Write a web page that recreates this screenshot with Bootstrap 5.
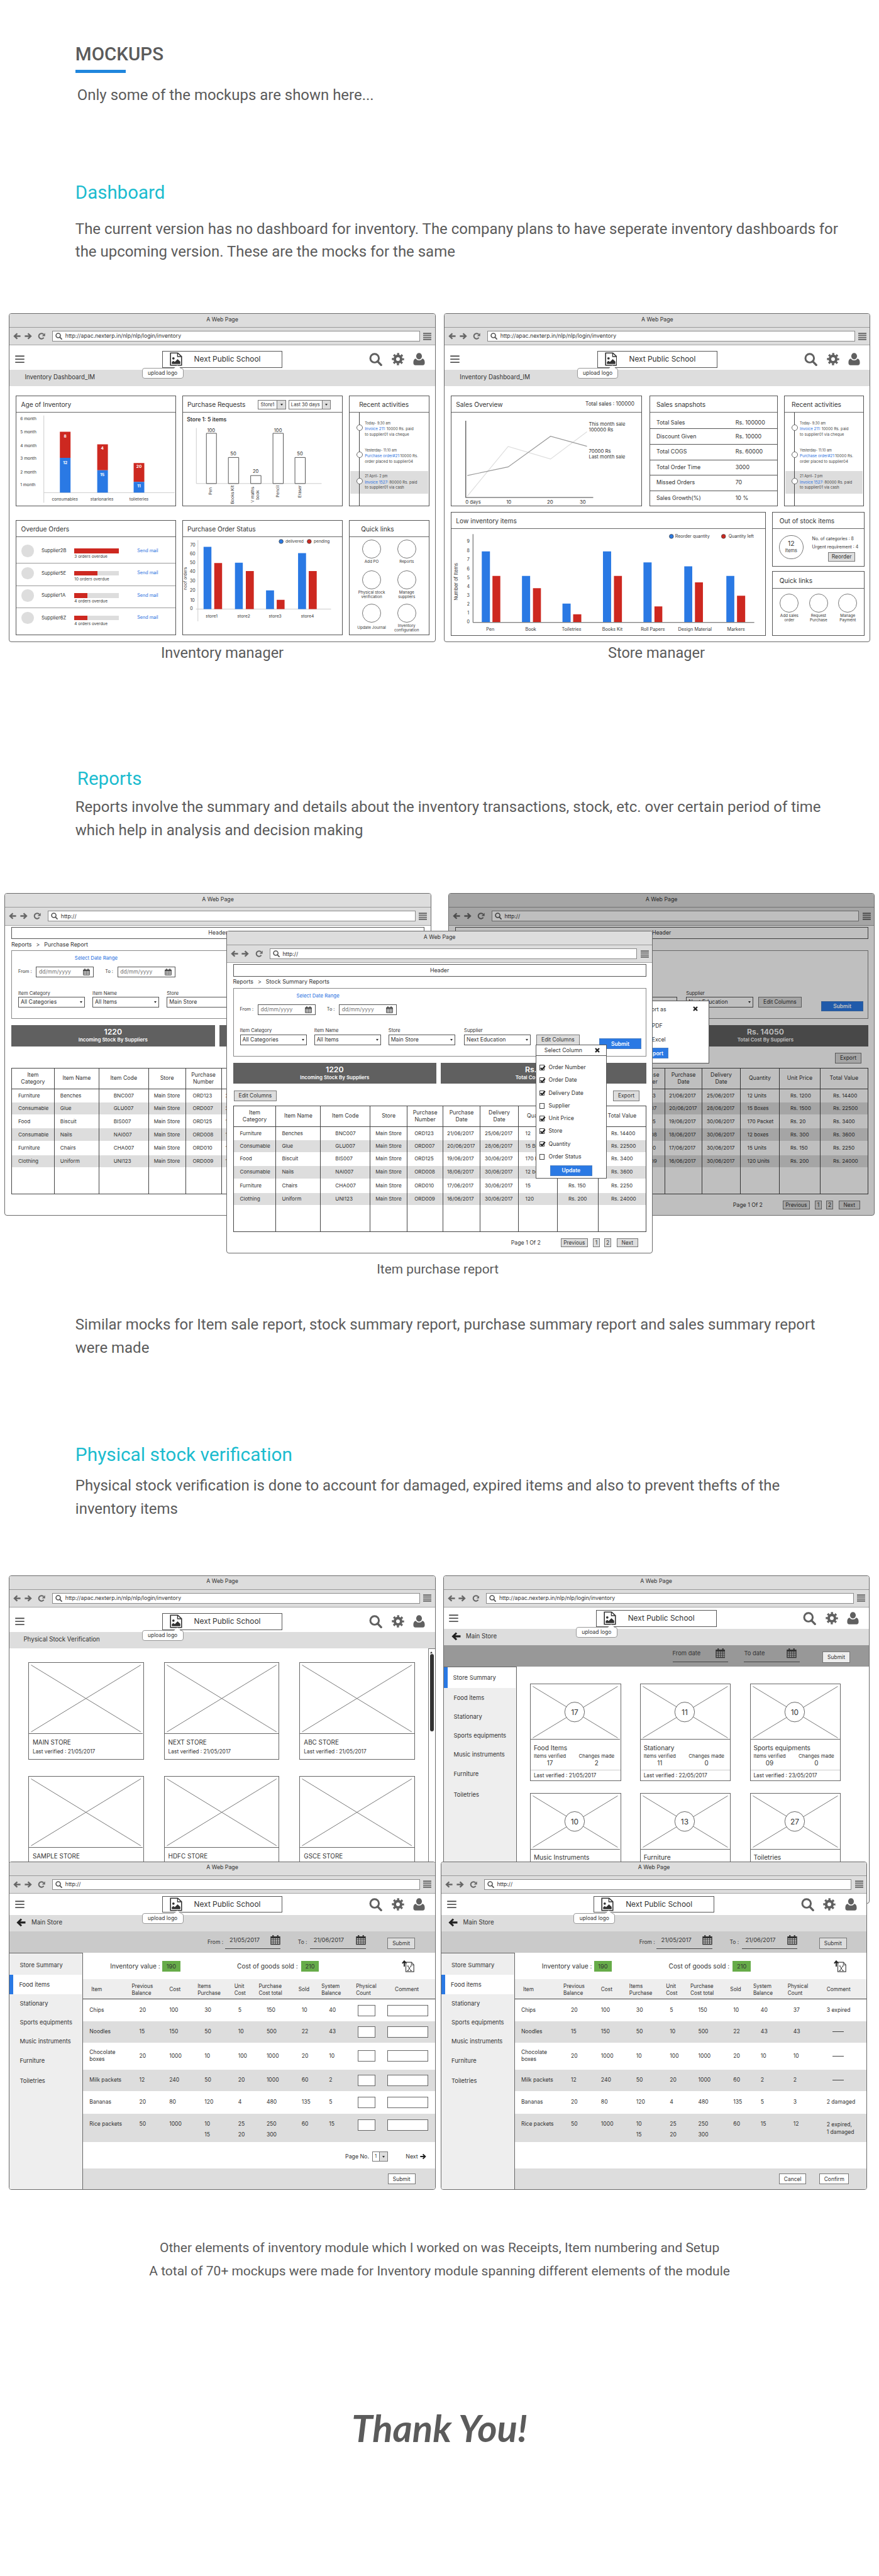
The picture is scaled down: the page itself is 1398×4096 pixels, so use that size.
<!DOCTYPE html>
<html lang="en">
<head>
<meta charset="utf-8">
<meta name="viewport" content="width=device-width, initial-scale=1">
<title>Mockups</title>
<link href="https://cdn.jsdelivr.net/npm/bootstrap@5.3.0/dist/css/bootstrap.min.css" rel="stylesheet">
<style>
html,body{overflow:hidden;background:#fff}
.sheet{width:1400px;height:4101px;zoom:.9987;font-family:Roboto,sans-serif;color:#5b5b5b;overflow:hidden}
.sheet h1{font-size:29.6px;line-height:36px;font-weight:500;color:#5b5b5b;margin:0}
.sheet h2{font-size:29.5px;line-height:36px;font-weight:400;color:#1cbccf;margin:0}
.copy{font-size:24px;line-height:36.5px;margin:0}
.inset{padding-left:120px}
.underbar{width:80px;height:5px;background:#1f86dd;margin-top:6px}
.cap{font-size:23.6px;line-height:30px}
.block-a{height:1223px;padding-top:69px}
.block-b{height:1075px}
.block-c{height:1263px}
.stage-reports{position:relative;height:576px;margin-top:82px}
.stage-stock{position:relative;height:980px;margin-top:87.5px}
.thanks{font-family:Lato,sans-serif;font-weight:700;font-style:italic;font-size:60px;line-height:64px}

/* browser frame */
.win{width:679px;border:1.5px solid #6a6a6a;border-radius:4px;background:#fff;color:#333;font-family:Inter,sans-serif;font-size:9px;line-height:1.2;overflow:hidden;position:relative;display:flex;flex-direction:column}
.win.win-at{position:absolute}
.win-title{height:22px;flex:none;background:#ddd;border-bottom:1px solid #999;display:flex;justify-content:center;align-items:center;padding-bottom:3px;font-size:8.8px}
.win-tools{height:28.5px;flex:none;background:#ddd;border-bottom:2px solid #a5a5a5;display:flex;align-items:center;padding:0 5.5px 0 6px;color:#666}
.win-url{flex:1;height:17px;background:#fff;border:1.3px solid #8a8a8a;margin:0 5.5px 0 11px;display:flex;align-items:center;padding-left:4px;color:#333;font-size:8.72px}
.ico{display:block;flex:none}
.school{height:39.2px;flex:none;display:grid;grid-template-columns:1fr 192px 1fr;align-items:center;padding-top:5px;position:relative;z-index:2;background:#fff}
.school.short{height:34.2px;padding-top:0}
.school-box{height:26.7px;border:1.2px solid #555;background:#fff;display:flex;align-items:center;padding-left:11px;font-size:11.9px;position:relative}
.school-box span.nm{margin-left:19px}
.tip{position:absolute;left:-33px;top:26px;width:66px;height:17px;border:1px solid #999;border-radius:4px;background:#fff;font-size:8.5px;display:flex;align-items:center;justify-content:center}
.tip svg{position:absolute;left:49px;top:-6px}
.subbar{height:25.5px;flex:none;background:#ddd;display:flex;align-items:center;padding:0 0 2px 24px;font-size:9.7px}
.panel{border:1.2px solid #555;background:#fff;display:flex;flex-direction:column;min-width:0}
.panel-h{height:25.8px;flex:none;border-bottom:1.2px solid #666;display:flex;align-items:center;padding:0 7px;font-size:10.2px;color:#333;padding-top:2px;white-space:nowrap}
.panel svg.plot{display:block;flex:none}
svg text{font-family:Inter,sans-serif;fill:#333}
svg .wh text{fill:#fff}
.dash1{display:grid;grid-template-columns:254.5px 255px 127.5px;column-gap:10.5px;row-gap:22px;grid-template-rows:176.6px 182.8px;padding:15px 0 0 10px}
.dash2{padding:15px 0 0 10px}
.mini{border:1px solid #777;height:15px;display:flex;background:#fff;font-size:7.6px;align-items:center;padding-left:3px}
.mini i{margin-left:auto;height:100%;background:#ddd;border-left:1px solid #777;width:13.5px;display:flex;align-items:center;justify-content:center}
.tri{width:0;height:0;border:3px solid transparent;border-top:4px solid #333;border-bottom:0}
.act{position:relative;height:149px}
.act:before{content:"";position:absolute;left:15px;top:0;bottom:0;border-left:1.2px solid #444}
.act-i{position:relative;height:43.5px;padding:0 0 0 24px;font-size:6.14px;line-height:8.8px;color:#444;top:13px;white-space:nowrap}
.act-i small{font-size:5.5px;display:block;margin-bottom:.5px}
.act-i:before{content:"";position:absolute;left:10.5px;top:6.5px;width:10px;height:10px;border-radius:50%;border:1px solid #666;background:#fff;z-index:1}
.act-i.on{background:#ddd;height:36px;margin:0 1px;padding-left:23px;padding-top:4px;top:7px}
.act-i.on:before{left:9.5px;top:10.5px}
.act-i.on:after{content:"";position:absolute;left:14px;top:0;bottom:0;border-left:1.2px solid #444}
.blue{color:#1f6fe0}
.owe{height:35.5px;border-bottom:1px solid #999;display:flex;padding-left:8px;font-size:7.7px}
.owe:last-child{border:0}
.owe .who{width:52.5px;margin:10.5px 0 0 12px}
.owe .meter{width:100px;padding-top:11.5px}
.owe .due{font-size:6.5px;line-height:8px;margin-top:1.5px}
.owe .send{font-size:7.2px;margin-top:11px}
.dot{width:19.5px;height:19.5px;border-radius:50%;background:#ddd;margin-top:5.5px}
.track{width:71px;height:7.4px;background:#ddd}
.track b{display:block;height:100%;background:#cd2820}
.ql{font-size:6.3px;line-height:6.8px;text-align:center}
.ring{width:30px;height:30px;border:1px solid #777;border-radius:50%;margin:0 auto 2px;background:#fff}
.snap{height:24.9px;border-bottom:1.2px solid #555;display:flex;align-items:center;font-size:8.9px;padding-left:10px}
.snap:last-child{border:0}
.snap span{width:126px}
.wbtn{border:1.2px solid #777;background:#ddd;color:#333;font-size:8.5px;display:flex;align-items:center;justify-content:center;flex:none}
.wbtn.go{background:#2a79e4;color:#fff;font-weight:600;border-color:#4a7fc4}

/* report screens */
.rp{padding:2px 9.5px 0 9.5px}
.rp-head{height:19.6px;border:1.2px solid #555;display:flex;align-items:center;justify-content:center;font-size:8.8px}
.crumb{height:17.6px;display:flex;align-items:center;font-size:8.9px;gap:7px}
.rp-f{height:109.4px;border:1.2px solid #888;padding:7px 0 0 10px;font-size:7.3px}
.inp{height:16.5px;border:1.2px solid #555;display:flex;align-items:center;justify-content:space-between;font-size:8.6px;background:#fff;width:92px;padding:0 5px 0 3.5px;color:#777}
.sel{width:106.5px;height:16.8px;border:1.2px solid #555;display:flex;align-items:center;justify-content:space-between;font-size:8.7px;padding:0 3px;margin-top:1.5px}
.stat{height:33.7px;background:#606060;color:#fff;font-size:8px;font-weight:600;text-align:center;line-height:12px;padding-top:4px}
.stat b{display:block;font-size:12.3px;line-height:14.5px;font-weight:600}
.rt{width:657px;border-collapse:collapse;table-layout:fixed;font-size:8.2px;line-height:9px;color:#333;border:1.2px solid #444}
.rt th,.rt td{border-left:1.2px solid #444;padding:0;font-weight:400;vertical-align:middle;white-space:nowrap}
.rt th{text-align:center;border-bottom:1.2px solid #444;font-size:8.8px;line-height:10.7px;height:33.4px}
.rt tr.g td{background:#ddd}
.pager{height:23px;display:flex;align-items:center;justify-content:flex-end;font-size:8.8px;padding:0 13px 0 0;margin-top:6px}
.pager .wbtn{height:13.6px;font-size:8.4px}
.shade{position:absolute;inset:0;background:rgba(0,0,0,.25)}
.pop{position:absolute;background:#fff;border:1.2px solid #555;font-size:8.8px}
.ck{width:8.6px;height:8.6px;border:1px solid #444;flex:none;position:relative;margin-right:6px}
.ck svg{position:absolute;left:-.5px;top:-1.5px}
.ckr{display:flex;align-items:center;height:20.3px;padding-left:5px;white-space:nowrap}

/* stock screens */
.xbox{display:block;border-bottom:1.2px solid #666}
.store{border:1.2px solid #666;background:#fff}
.side{width:117px;background:#eee;border-right:1.2px solid #666;border-top:1.2px solid #666;flex:none;font-size:9.4px;position:relative;white-space:nowrap}
.side div{padding-left:16px;display:flex;align-items:center}
.side .on{background:#fff;border-left:7px solid #2a79e4;padding-left:9px;margin-right:1px}
.datebar{flex:none;display:flex;padding-left:0}
.ul{border-bottom:1.4px solid #444;display:flex;justify-content:space-between;align-items:center}
.green{background:#67ac49;display:inline-flex;align-items:center;justify-content:center;width:28.5px;height:17.2px;font-size:9.2px;flex:none}
.st{width:560px;table-layout:fixed;border-collapse:collapse;font-size:8.6px;line-height:11px;color:#333}
.st th{font-weight:400;background:#eee;height:31.8px;border-bottom:1.8px solid #444;padding:2px 0 0 0;vertical-align:middle;line-height:11px;font-size:8.3px}
.st td{vertical-align:middle;padding:0}
.st tr.g td{background:#ddd}
.st .bx{border:1.2px solid #666;background:#fff;height:18.2px}
</style>
</head>
<body>
<svg width="0" height="0" class="d-none">
<symbol id="i-back" viewBox="0 0 12 11"><path d="M5.6.4 7.3 2 5 4.2h6.6v2.6H5L7.3 9 5.6 10.6.3 5.5z" fill="currentColor"/></symbol>
<symbol id="i-fwd" viewBox="0 0 12 11"><path d="M6.4.4 4.7 2 7 4.2H.4v2.6H7L4.7 9l1.7 1.6 5.3-5.1z" fill="currentColor"/></symbol>
<symbol id="i-reload" viewBox="0 0 12 11"><path d="M9.6 7.8A4.3 4.3 0 1 1 9.3 2.7" fill="none" stroke="currentColor" stroke-width="2"/><path d="M11.7.6v4.9H6.8z" fill="currentColor"/></symbol>
<symbol id="i-find" viewBox="0 0 21 21"><circle cx="8.8" cy="8.6" r="6.8" fill="none" stroke="currentColor" stroke-width="3"/><path d="m13.6 13.6 5.6 5.8" stroke="currentColor" stroke-width="3.4" stroke-linecap="round"/></symbol>
<symbol id="i-gear" viewBox="0 0 20 20"><circle cx="10" cy="10" r="5.1" fill="none" stroke="currentColor" stroke-width="4.2"/><circle cx="10" cy="10" r="8.2" fill="none" stroke="currentColor" stroke-width="3" stroke-dasharray="3.3 3.14" stroke-dashoffset="1.65"/></symbol>
<symbol id="i-user" viewBox="0 0 19 20"><ellipse cx="9.5" cy="5.3" rx="4.6" ry="5.1" fill="currentColor"/><path d="M4.4 9.3c1.4 2.2 3 2.7 5.1 2.7s3.7-.5 5.1-2.7c2.8.4 4 2.5 4 6.5 0 2.8-1.2 4-3.2 4H3.6c-2 0-3.2-1.2-3.2-4 0-4 1.2-6.1 4-6.5z" fill="currentColor"/></symbol>
<symbol id="i-burger" viewBox="0 0 14 12"><path d="M0 1.2h14M0 6h14M0 10.8h14" stroke="currentColor" stroke-width="1.7"/></symbol>
<symbol id="i-burger4" viewBox="0 0 13 12"><path d="M0 1.2h13M0 4.4h13M0 7.6h13M0 10.8h13" stroke="currentColor" stroke-width="1.9"/></symbol>
<symbol id="i-pic" viewBox="0 0 20 22"><path d="M1.2 1.2h11.5l6.1 5.6v14H1.2z" fill="#fff" stroke="#333" stroke-width="1.6"/><path d="M12.4 1v6h6.4" fill="none" stroke="#333" stroke-width="1.3"/><circle cx="5.8" cy="9.8" r="1.9" fill="#333"/><path d="M3.3 18.8v-3.2l2.5-1.8 2.2 1.8 4.5-4.6 4.3 4v3.8z" fill="#333"/></symbol>
<symbol id="i-cal" viewBox="0 0 12 12"><path d="M.7 2.3h10.6v9H.7z" fill="none" stroke="#333"/><path d="M.7 3.5h10.6M.7 6h10.6M.7 8.6h10.6M3.3 4v7.3M6 4v7.3M8.7 4v7.3" stroke="#333" stroke-width=".7"/><path d="M.7 2.5h10.6v1.7H.7z" fill="#333"/><path d="M3.2.3v2.5M8.8.3v2.5" stroke="#333" stroke-width="1.6"/></symbol>
<symbol id="i-tip" viewBox="0 0 12 7"><path d="M0 6.5 6 .7l6 5.8" fill="#fff"/></symbol>
<symbol id="i-x" viewBox="0 0 8 8"><path d="m1 1 6 6M7 1 1 7" stroke="#222" stroke-width="2.3"/></symbol>
<symbol id="i-tick" viewBox="0 0 10 10"><path d="m1.8 5 2.4 2.4L8.8 2" fill="none" stroke="#222" stroke-width="2.3"/></symbol>
<symbol id="i-xls" viewBox="0 0 20 19"><path d="M6.5 3.2h9l3.7 4v11H6.5z" fill="#fff" stroke="#444" stroke-width="1.2"/><path d="M15.3 3v4.3h4" fill="none" stroke="#444"/><path d="m9.5 9 5 7.500m0-7.500-5 7.500M8.500 9h2.500m2.500 0H16m-7.500 7.500H11m2.500 0H16" stroke="#444" fill="none"/><path d="M4 10V3M.8 5 4 1.300 7.300 5" stroke="#222" stroke-width="1.900" fill="none"/></symbol>
</svg>

<main class="sheet">
<section class="block-a">
  <div class="inset">
    <h1>MOCKUPS</h1>
    <div class="underbar"></div>
    <p class="copy" style="margin:17.5px 0 0 3px">Only some of the mockups are shown here...</p>
    <h2 style="margin-top:119px">Dashboard</h2>
    <p class="copy" style="margin-top:21.5px">The current version has no dashboard for inventory. The company plans to have seperate inventory dashboards for<br>the upcoming version. These are the mocks for the same</p>
  </div>
  <div class="d-flex" style="margin:79px 0 0 14.5px;gap:13.8px">
    <figure class="m-0 text-center">
      <div class="win text-start" style="height:523.5px" data-url="http://apac.nexterp.in/nlp/nlp/login/inventory" data-school="tall">
        <div class="subbar">Inventory Dashboard_IM</div>
        <div class="dash1">
          <div class="panel">
            <div class="panel-h">Age of Inventory</div>
            <svg class="plot" width="252" height="149" viewBox="26.7 658 252 149" font-size="6.6">
              <g><text x="33" y="670.2">6 month</text><text x="33" y="691.2">5 month</text><text x="33" y="712.7">4 month</text><text x="33" y="733.4">3 month</text><text x="33" y="754.8">2 month</text><text x="33" y="775.2">1 month</text></g>
              <path d="M70.5 662.7V801.5M70.5 785.5H280" stroke="#ccc" fill="none"/>
              <g fill="#cd2820"><path d="M96 688.5h17V730H96zM155.5 708.5h17V750h-17zM213.5 738.3h17v30h-17z"/></g>
              <g fill="#2a79e4"><path d="M96 730h17v55.5H96zM155.5 750h17v35.5h-17zM213.5 768.4h17v17.1h-17z"/></g>
              <g text-anchor="middle" font-size="6.5" font-weight="700" class="wh"><text x="104.5" y="697.8">8</text><text x="104.5" y="740.4">12</text><text x="163.5" y="717">4</text><text x="163.5" y="758.8">15</text><text x="222" y="745.8">20</text><text x="222" y="776.7">11</text></g>
              <g text-anchor="middle"><text x="104" y="797.7">consumables</text><text x="163" y="797.7">starionaries</text><text x="222" y="797.7">toileteries</text></g>
            </svg>
          </div>
          <div class="panel">
            <div class="panel-h">Purchase Requests
              <div class="mini ms-auto" style="width:44.5px">Store1<i><span class="tri"></span></i></div>
              <div class="mini" style="width:67.5px;margin:0 10.5px 0 4px">Last 30 days<i><span class="tri"></span></i></div>
            </div>
            <svg class="plot" width="252" height="149" viewBox="292.2 658 252 149" font-size="6.6">
              <text x="298.5" y="672.5" font-size="8.6" font-weight="600">Store 1: 5 items</text>
              <path d="M313.5 682.7V771M313.5 771H513" stroke="#ccc" fill="none"/>
              <g fill="#fff" stroke="#555"><path d="M329.5 691h16v80h-16zM364.5 729.5h16.5V771h-16.5zM400 758.3h16.5V771H400zM435.5 691H452v80h-16.5zM470.5 729.5H487V771h-16.5z"/></g>
              <g text-anchor="middle" font-size="7.6"><text x="337" y="688.7">100</text><text x="372.3" y="726.5">50</text><text x="408" y="753.7">20</text><text x="443.5" y="688.7">100</text><text x="478.5" y="726.5">50</text></g>
              <text transform="translate(338.5 789) rotate(-90)">Pen</text><text transform="translate(373 803.5) rotate(-90)">Books Kit</text><text transform="translate(405.8 801.5) rotate(-90)">V maths</text><text transform="translate(413 797) rotate(-90)">book</text><text transform="translate(445 793) rotate(-90)">Pencil</text><text transform="translate(480 793.5) rotate(-90)">Eraser</text>
            </svg>
          </div>
          <div class="panel" data-activities="15"></div>
          <div class="panel">
            <div class="panel-h">Overdue Orders</div>
            <div style="padding-top:7px">
              <div class="owe"><div class="dot"></div><div class="who">Supplier2B</div><div class="meter"><div class="track"><b style="width:100%"></b></div><div class="due">3 orders overdue</div></div><span class="blue send">Send mail</span></div>
              <div class="owe"><div class="dot"></div><div class="who">Supplier5E</div><div class="meter"><div class="track"><b style="width:52%"></b></div><div class="due">10 orders overdue</div></div><span class="blue send">Send mail</span></div>
              <div class="owe"><div class="dot"></div><div class="who">Supplier1A</div><div class="meter"><div class="track"><b style="width:29%"></b></div><div class="due">4 orders overdue</div></div><span class="blue send">Send mail</span></div>
              <div class="owe"><div class="dot"></div><div class="who">Supplier6Z</div><div class="meter"><div class="track"><b style="width:29%"></b></div><div class="due">4 orders overdue</div></div><span class="blue send">Send mail</span></div>
            </div>
          </div>
          <div class="panel">
            <div class="panel-h">Purchase Order Status</div>
            <svg class="plot" width="252" height="155" viewBox="292.2 857 252 155" font-size="6.8">
              <g text-anchor="end" font-size="7"><text x="312" y="872">70</text><text x="312" y="886.2">60</text><text x="312" y="900.4">50</text><text x="312" y="914.5">40</text><text x="312" y="928.7">30</text><text x="312" y="944.3">20</text><text x="311" y="960">10</text><text x="308" y="973.5">0</text></g>
              <text transform="translate(298.5 941) rotate(-90)" font-size="6.6">noof orders</text>
              <path d="M316 861.9V991M313 971.6H528" stroke="#ccc" fill="none"/>
              <g fill="#2a79e4"><path d="M325 872.4h12.5v99.2H325zM375 897.9h12.5v73.7H375zM424.5 941.8h12.7v29.8h-12.7zM475.5 882.6h12.7v89h-12.7z"/></g>
              <g fill="#cd2820"><path d="M342 898.2h12.5v73.4H342zM392.3 911h12.7v60.6h-12.7zM441.5 957h12.5v14.6h-12.5zM492.5 911h12.7v60.6h-12.7z"/></g>
              <g stroke="#444" stroke-width=".8"><circle cx="448.5" cy="864" r="3.3" fill="#2a79e4"/><circle cx="493.3" cy="864" r="3.3" fill="#cd2820"/></g>
              <text x="455.5" y="866.5" font-size="6.6">delivered</text><text x="500.5" y="866.5" font-size="6.6">pending</text>
              <g text-anchor="middle"><text x="338" y="985.6">store1</text><text x="389" y="985.6">store2</text><text x="439" y="985.6">store3</text><text x="490.5" y="985.6">store4</text></g>
            </svg>
          </div>
          <div class="panel">
            <div class="panel-h" style="padding-left:18px">Quick links</div>
            <div class="row row-cols-2 g-0 ql" style="padding:4.5px 7px 0 7px">
              <div class="col" style="height:48.5px"><div class="ring"></div>Add PO</div><div class="col"><div class="ring"></div>Reports</div>
              <div class="col" style="height:53.5px"><div class="ring"></div>Physical stock<br>verification</div><div class="col"><div class="ring"></div>Manage<br>suppliers</div>
              <div class="col"><div class="ring"></div><div style="margin-top:5px">Update Journal</div></div><div class="col"><div class="ring"></div>Inventory<br>configuration</div>
            </div>
          </div>
        </div>
      </div>
      <figcaption class="cap" style="margin-top:3.5px">Inventory manager</figcaption>
    </figure>
    <figure class="m-0 text-center">
      <div class="win text-start" style="height:523.5px" data-url="http://apac.nexterp.in/nlp/nlp/login/inventory" data-school="tall">
        <div class="subbar">Inventory Dashboard_IM</div>
        <div class="dash2">
          <div class="d-flex" style="height:176.6px;margin-bottom:8.4px">
            <div class="panel" style="width:304.5px;margin-right:11.5px">
              <div class="panel-h">Sales Overview<span class="ms-auto" style="font-size:8.3px;padding-right:4.5px">Total sales : 100000</span></div>
              <svg class="plot" width="302" height="149" viewBox="719.2 658 302 149" font-size="7.8">
                <path d="M744.5 791 809.5 712 877 732 935 688.5" fill="none" stroke="#ddd" stroke-width="1.2"/>
                <path d="M744.5 758.3 809.5 744.5 877 695.7 935 711.7" fill="none" stroke="#999" stroke-width="1.2"/>
                <path d="M742 671V793.2H945" fill="none" stroke="#444" stroke-width="1.2"/>
                <text x="938" y="679.3">This month sale</text><text x="938" y="688.3">100000 Rs</text><text x="938" y="722.2">70000 Rs</text><text x="938" y="731.6">Last month sale</text>
                <text x="741.5" y="803.6">0 days</text><text x="806.5" y="803.6">10</text><text x="871.5" y="803.6">20</text><text x="923.5" y="803.6">30</text>
              </svg>
            </div>
            <div class="panel" style="width:204.5px;margin-right:10px">
              <div class="panel-h" style="padding-left:10px">Sales snapshots</div>
              <div>
                <div class="snap" style="height:26.5px;padding-top:8px"><span>Total Sales</span>Rs. 100000</div>
                <div class="snap"><span>Discount Given</span>Rs. 10000</div>
                <div class="snap"><span>Total COGS</span>Rs. 60000</div>
                <div class="snap" style="height:24.2px"><span>Total Order Time</span>3000</div>
                <div class="snap"><span>Missed Orders</span>70</div>
                <div class="snap" style="height:23px"><span>Sales Growth(%)</span>10 %</div>
              </div>
            </div>
            <div class="panel" style="width:127.5px" data-activities="11"></div>
          </div>
          <div class="d-flex" style="height:198px">
            <div class="panel" style="width:501.5px;margin-right:10px">
              <div class="panel-h" style="height:27px">Low inventory items</div>
              <svg class="plot" width="499" height="169" viewBox="719.2 844.5 499 169" font-size="7">
                <g text-anchor="middle"><text x="746" y="867">9</text><text x="746" y="881.8">8</text><text x="746" y="895.6">7</text><text x="746" y="910.2">6</text><text x="746" y="924.3">5</text><text x="746" y="938.2">4</text><text x="746" y="952.3">3</text><text x="746" y="966.5">2</text><text x="746" y="980.7">1</text><text x="746" y="994.9">0</text></g>
                <text transform="translate(729.3 958.5) rotate(-90)" font-size="7.6">Number of Items</text>
                <g fill="#2a79e4"><path d="M767.5 880.4h13V993h-13zM831.5 919.3h13V993h-13zM896 963.3h13V993h-13zM960.5 880.4h13V993h-13zM1025 897.9h13V993h-13zM1090 904h12.7v89H1090zM1157 919.3h12.7V993H1157z"/></g>
                <g fill="#cd2820"><path d="M784.5 919.3H797V993h-12.5zM849 939h12.7v54H849zM913 980.4h13V993h-13zM978 919.3h12.7V993H978zM1042.5 968H1055v25h-12.5zM1107 929.5h12.7V993H1107zM1174 951h13v42h-13z"/></g>
                <path d="M753.5 852.8V993.5H1201.5" fill="none" stroke="#555"/>
                <g stroke="#444" stroke-width=".8"><circle cx="1069.5" cy="856.4" r="3.3" fill="#2a79e4"/><circle cx="1152.5" cy="856.4" r="3.3" fill="#cd2820"/></g>
                <text x="1075.5" y="858.9">Reorder quantity</text><text x="1160.5" y="858.9">Quantity left</text>
                <g text-anchor="middle" font-size="7.3"><text x="781" y="1007">Pen</text><text x="845.5" y="1007">Book</text><text x="910.5" y="1007">Toiletries</text><text x="975.5" y="1007">Books Kit</text><text x="1040" y="1007">Roll Papers</text><text x="1107" y="1007">Design Material</text><text x="1172.5" y="1007">Markers</text></g>
              </svg>
            </div>
            <div class="d-flex flex-column" style="width:147px;gap:7.5px">
              <div class="panel" style="height:87.3px">
                <div class="panel-h" style="height:27px;padding-left:10.5px">Out of stock items</div>
                <div class="d-flex" style="padding:9.5px 0 0 10px">
                  <div class="ring m-0 d-flex flex-column align-items-center justify-content-center" style="width:38.5px;height:38.5px;font-size:7.5px"><span style="font-size:10.5px">12</span>Items</div>
                  <div style="margin-left:14px;font-size:6.9px;line-height:12.6px;white-space:nowrap">No. of categories : 8<br>Urgent requirement : 4<div class="wbtn" style="width:43px;height:14.7px;margin:2px 0 0 25.5px">Reorder</div></div>
                </div>
              </div>
              <div class="panel flex-grow-1">
                <div class="panel-h" style="height:27px;padding-left:10.5px">Quick links</div>
                <div class="d-flex ql" style="padding:8px 0 0 3px"><div style="width:46.5px"><div class="ring"></div>Add sales<br>order</div><div style="width:46.5px"><div class="ring"></div>Request<br>Purchase</div><div style="width:46.5px"><div class="ring"></div>Manage<br>Payment</div></div>
              </div>
            </div>
          </div>
        </div>
      </div>
      <figcaption class="cap" style="margin-top:3.5px;padding-right:3px">Store manager</figcaption>
    </figure>
  </div>
</section>

<section class="block-b">
  <div class="inset">
    <h2 style="padding-left:3px">Reports</h2>
    <p class="copy" style="margin-top:8px">Reports involve the summary and details about the inventory transactions, stock, etc. over certain period of time<br>which help in analysis and decision making</p>
  </div>
  <div class="stage-reports">
    <div class="win win-at" style="left:7.5px;top:0;height:514px" data-url="http://" data-report="Purchase Report"></div>
    <div class="win win-at" style="left:714px;top:0;height:514px" data-url="http://" data-report="Purchase Report" data-dim="1"></div>
    <div class="win win-at" style="left:360.5px;top:60px;height:514px" data-url="http://" data-report="Stock Summary Reports" data-columns="1"></div>
  </div>
  <div class="cap text-center" style="margin-top:9px;padding-right:6px;font-size:20.9px">Item purchase report</div>
  <p class="copy inset" style="margin-top:54px">Similar mocks for Item sale report, stock summary report, purchase summary report and sales summary report<br>were made</p>
</section>

<section class="block-c">
  <div class="inset">
    <h2 style="font-size:29.9px">Physical stock verification</h2>
    <p class="copy" style="margin-top:13.5px">Physical stock verification is done to account for damaged, expired items and also to prevent thefts of the<br>inventory items</p>
  </div>
  <div class="stage-stock">
    <div class="win win-at" style="left:14.5px;top:0;height:523px" data-url="http://apac.nexterp.in/nlp/nlp/login/inventory" data-school="tall">
      <div class="subbar" style="padding-left:22px">Physical Stock Verification</div>
      <div class="d-flex">
        <div class="d-grid" id="stores" style="grid-template-columns:repeat(3,184px);column-gap:32px;row-gap:26px;padding:22px 0 0 29.5px;width:667px"></div>
        <div style="width:10.5px;border-left:1px solid #777;border-top:1px solid #777;padding:4px 0 0 2px"><div class="tri" style="transform:rotate(180deg);border-width:4px 3px 0"></div><div style="width:5.5px;height:123px;border-radius:3px;background:#333;margin-top:1.5px"></div></div>
      </div>
    </div>
    <div class="win win-at" style="left:705.5px;top:0;height:523px" data-url="http://apac.nexterp.in/nlp/nlp/login/inventory" data-school="short">
      <div class="subbar" style="padding-left:12px"><svg class="ico" width="15" height="14" style="color:#222"><use href="#i-back"/></svg><span style="margin-left:8.5px">Main Store</span></div>
      <div class="datebar" style="height:34.4px;background:#989898;padding-left:364.5px;font-size:9.4px">
        <div class="ul" style="width:89px;height:27.5px;padding-right:5px">From date<svg class="ico" width="16" height="17"><use href="#i-cal"/></svg></div>
        <div class="ul" style="width:89px;height:27.5px;padding-right:5px;margin-left:25px">To date<svg class="ico" width="16" height="17"><use href="#i-cal"/></svg></div>
        <div class="wbtn" style="width:43.5px;height:18px;margin:10px 0 0 36px;background:#eee">Submit</div>
      </div>
      <div class="d-flex flex-grow-1">
        <div class="side"><div class="on" style="height:32.5px">Store Summary</div><div style="height:32px">Food items</div><div style="height:29px">Stationary</div><div style="height:30px">Sports equipments</div><div style="height:30px">Music instruments</div><div style="height:33px">Furniture</div><div style="height:32px">Toiletries</div></div>
        <div class="d-grid align-content-start" id="cats" style="grid-template-columns:repeat(3,144.5px);column-gap:30.5px;row-gap:19.5px;padding:27px 0 0 21px"></div>
      </div>
    </div>
    <div class="win win-at" style="left:14.5px;top:455.5px;height:523px" data-url="http://" data-school="short" data-stock="edit"></div>
    <div class="win win-at" style="left:702px;top:455.5px;height:523px" data-url="http://" data-school="short" data-stock="view"></div>
  </div>
</section>

<section class="text-center">
  <p class="copy" style="font-size:21px">Other elements of inventory module which I worked on was Receipts, Item numbering and Setup<br>A total of 70+ mockups were made for Inventory module spanning different elements of the module</p>
  <div class="thanks" style="margin-top:200px">Thank You!</div>
</section>
</main>

<script>
const ico=(n,w,h,s='')=>`<svg class="ico" width="${w}" height="${h}" style="${s}"><use href="#i-${n}"/></svg>`;
const chrome=u=>`<div class="win-title">A Web Page</div><div class="win-tools">${ico('back',12,11)}${ico('fwd',12,11,'margin-left:5.5px')}${ico('reload',12,11,'margin-left:9.5px')}<div class="win-url">${ico('find',11,11,'color:#555;margin-right:4.5px')}${u}</div>${ico('burger4',13,12)}</div>`;
const school=k=>`<div class="school ${k==='short'?'short':''}"><div style="padding-left:8.5px;color:#555">${ico('burger',15,12.5)}</div><div class="school-box">${ico('pic',20,22)}<span class="nm">Next Public School</span><div class="tip">${ico('tip',12,7)}upload logo</div></div><div class="d-flex justify-content-end" style="gap:14.5px;padding-right:15.5px;color:#606060">${ico('find',21,21)}${ico('gear',20,20)}${ico('user',19,20)}</div></div>`;

/* activity panels */
document.querySelectorAll('[data-activities]').forEach(p=>{
  p.innerHTML=`<div class="panel-h" style="padding-left:${p.dataset.activities}px">Recent activities</div><div class="act">
  <div class="act-i"><small>Today- 9:30 am</small><span class="blue">Invoice 211:</span> 10000 Rs. paid<br>to supplier01 via cheque</div>
  <div class="act-i"><small>Yesterday- 11:10 am</small><span class="blue">Purchase order#21:</span>10000 Rs.<br>order placed to supplier04</div>
  <div class="act-i on"><small>21 April- 2 pm</small><span class="blue">Invoice 1527:</span> 80000 Rs. paid<br>to supplier01 via cash</div></div>`;
});

/* report screens */
const rows=[['Furniture','Benches','BNC007','ORD123','21/06/2017','25/06/2017','12','Units','1200','14400',21.8],
['Consumable','Glue','GLU007','ORD007','20/06/2017','28/06/2017','15','Boxes','1500','22500',18.4],
['Food','Biscuit','BIS007','ORD125','19/06/2017','30/06/2017','170','Packet','20','3400',22.9],
['Consumable','Nails','NAI007','ORD008','18/06/2017','30/06/2017','12','boxes','300','3600',19.2],
['Furniture','Chairs','CHA007','ORD010','17/06/2017','30/06/2017','15','Units','150','2250',23.3],
['Clothing','Uniform','UNI123','ORD009','16/06/2017','30/06/2017','120','Units','200','24000',19.5]];
const pads=[10,9,23,8,11,6,7,10.5,17,20];
const select=(l,v,m)=>`<div style="margin-right:${m}px"><div>${l}</div><div class="sel">${v}<span class="tri"></span></div></div>`;
document.querySelectorAll('[data-report]').forEach(w=>{
  const cols=!!w.dataset.columns, dim=!!w.dataset.dim;
  const trs=rows.map((r,i)=>{
    const q=cols&&[0,4,5].includes(i)?r[6]:r[6]+' '+r[7];
    return `<tr class="${i%2?'g':''}" style="height:${r[10]}px">`+[r[0],r[1],r[2],'Main Store',r[3],r[4],r[5],q,'Rs. '+r[8],'Rs. '+r[9]].map((c,k)=>`<td style="padding-left:${pads[k]}px">${c}</td>`).join('')+'</tr>';
  }).join('');
  let h=`<div class="rp"><div class="rp-head">Header</div><div class="crumb"><span>Reports</span><span>&gt;</span><span>${w.dataset.report}</span></div>
  <div class="rp-f"><div class="blue" style="padding-left:90px;font-size:7.9px">Select Date Range</div>
  <div class="d-flex align-items-center" style="margin-top:9px"><span style="width:28.5px">From :</span><div class="inp">dd/mm/yyyy${ico('cal',11,11)}</div><span style="width:37.5px;padding-left:18px">To :</span><div class="inp">dd/mm/yyyy${ico('cal',11,11)}</div></div>
  <div class="d-flex" style="margin-top:21px;font-size:7.6px">${select('Item Category','All Categories',11.8)}${select('Item Name','All Items',11.8)}${select('Store','Main Store',14)}${select('Supplier','Next Education',8.5)}<div class="wbtn" style="width:69px;height:16.8px;margin-top:10.5px">Edit Columns</div><div class="wbtn go" style="width:66.5px;height:17px;margin:17px 0 0 31.5px">Submit</div></div></div>
  <div class="d-flex" style="margin-top:10px;gap:7px"><div class="stat" style="width:324px"><b>1220</b>Incoming Stock By Suppliers</div><div class="stat flex-grow-1"><b>Rs. 14050</b>Total Cost By Suppliers</div></div>
  <div class="d-flex" style="margin:10.5px 11px 7px 1px;height:16.6px">${cols?'<div class="wbtn" style="width:69px">Edit Columns</div>':''}${cols||dim?'<div class="wbtn ms-auto" style="width:41.5px">Export</div>':''}</div>
  <table class="rt"><colgroup>${[68,71,79,59,57,59,61.2,62,65,75.8].map(x=>`<col style="width:${x}px">`).join('')}</colgroup>
  <thead><tr><th>Item<br>Category</th><th>Item Name</th><th>Item Code</th><th>Store</th><th>Purchase<br>Number</th><th>Purchase<br>Date</th><th>Delivery<br>Date</th><th>Quantity</th><th>Unit Price</th><th>Total Value</th></tr></thead>
  <tbody>${trs}<tr style="height:42px">${'<td></td>'.repeat(10)}</tr></tbody></table>
  <div class="pager"><span>Page 1 Of 2</span><div class="wbtn" style="width:43px;margin-left:32px">Previous</div><div class="wbtn" style="width:11.5px;margin-left:8px">1</div><div class="wbtn" style="width:11.5px;margin-left:6.5px">2</div><div class="wbtn" style="width:34px;margin-left:8.5px">Next</div></div></div>`;
  if(cols){
    const it=[['Order Number',1],['Order Date',1],['Delivery Date',1],['Supplier',0],['Unit Price',1],['Store',1],['Quantity',1],['Order Status',0]];
    h+=`<div class="pop" style="left:491.5px;top:180px;width:113px;height:213px"><div class="d-flex align-items-center justify-content-between" style="height:17px;border-bottom:1.2px solid #555;padding:0 10px 0 13px">Select Column${ico('x',8,8)}</div><div style="padding-top:8.5px">${it.map(([t,c])=>`<div class="ckr"><span class="ck">${c?ico('tick',10,10):''}</span>${t}</div>`).join('')}</div><div class="wbtn go" style="width:67px;height:16.3px;margin:4px 0 0 22px">Update</div></div>`;
  }
  if(dim) h+=`<div class="shade"></div><div class="pop" style="left:296px;top:170px;width:118px;height:100px;padding:8px 0 0 10px">Export as<div style="position:absolute;right:17px;top:8px">${ico('x',8,8)}</div><div style="padding:16px 0 0 16px">PDF</div><div style="padding:11px 0 0 16px">Excel</div><div class="wbtn go" style="width:42px;height:16.5px;margin-top:8px">Export</div></div>`;
  w.innerHTML=h;
});

/* store and category tiles */
const cross=(w,h,n)=>`<svg class="xbox" width="${w}" height="${h}"><path d="M3.5 3.5 ${w-3.5} ${h-3}M${w-3.5} 3.5 3.5 ${h-3}" stroke="#777"/>${n?`<circle cx="${w/2-1}" cy="${h/2}" r="15.7" fill="#fff" stroke="#666"/><text x="${w/2-1}" y="${h/2+4.5}" text-anchor="middle" font-size="12">${n}</text>`:''}</svg>`;
document.getElementById('stores').innerHTML=['MAIN','NEXT','ABC','SAMPLE','HDFC','GSCE'].map(n=>`<div class="store" style="height:155.7px">${cross(181.6,113)}<div style="padding:8px 6px;font-size:9.9px">${n} STORE<div style="font-size:8.4px;margin-top:4px">Last verified : 21/05/2017</div></div></div>`).join('');
document.getElementById('cats').innerHTML=[['Food Items',17,17,2,21],['Stationary',11,11,0,22],['Sports equipments',10,'09',0,23],['Music Instruments',10,10,0,21],['Furniture',13,13,0,21],['Toiletries',27,27,0,21]].map(c=>`<div class="store" style="height:155px;font-size:8px">${cross(142.1,88.5,c[1])}<div style="padding:6.5px 4.5px 0;height:49px;border-bottom:1px solid #ccc"><div style="font-size:10.2px">${c[0]}</div><div class="d-flex justify-content-between" style="padding:3px 5px 0 0"><div class="text-center">Items verified<div style="font-size:9.9px">${c[2]}</div></div><div class="text-center">Changes made<div style="font-size:9.9px">${c[3]}</div></div></div></div><div style="padding:3px 4.5px;font-size:8.4px">Last verified : ${c[4]}/05/2017</div></div>`).join('');

/* stock tables */
const stock=[['Chips',20,100,30,5,150,10,40,37,'3 expired',35.3],['Noodles',15,150,50,10,500,22,43,43,'-',33.6],['Chocolate<br>boxes',20,1000,10,100,1000,20,10,10,'-',43.2],['Milk packets',12,240,50,20,1000,60,2,2,'-',34],['Bananas',20,80,120,4,480,135,5,3,'2 damaged',36],['Rice packets',50,1000,10,25,250,60,15,12,'2 expired,<br>1 damaged',45]];
const sp=[10,12,0,11,6,12.5,5,12];
document.querySelectorAll('[data-stock]').forEach(w=>{
  const ed=w.dataset.stock==='edit';
  const tr=stock.map((r,i)=>{
    const last=i===5, extra={3:15,4:20,5:300};
    let c=r.slice(0,8).map((v,k)=>`<td style="padding-left:${sp[k]}px;${last?'vertical-align:top;padding-top:11px':''}">${v}${last&&extra[k]?`<div style="margin-top:6.5px">${extra[k]}</div>`:''}</td>`).join('');
    const va=last?'vertical-align:top;padding-top:9px':'';
    c+=ed?`<td style="${va}"><div class="bx" style="width:28px;margin-left:3px"></div></td><td style="${va}"><div class="bx" style="width:65px"></div></td>`
      :`<td style="padding-left:9px;${last?'vertical-align:top;padding-top:11px':''}">${r[8]}</td><td style="padding-left:${r[9]==='-'?21:12}px;${last?'vertical-align:top;padding-top:11px;line-height:12.8px':''}">${r[9]==='-'?'<div style="width:18px;border-top:1.2px solid #444"></div>':r[9]}</td>`;
    return `<tr class="${i%2?'g':''}" style="height:${r[10]}px">${c}</tr>`;
  }).join('');
  w.innerHTML=`<div class="subbar" style="padding-left:11px;height:26px"><svg class="ico" width="15" height="14" style="color:#222"><use href="#i-back"/></svg><span style="margin-left:8.5px">Main Store</span></div>
  <div class="datebar" style="height:34.3px;background:#cacaca;padding-left:315px;font-size:8.5px"><div style="width:27.5px;padding-top:11.5px">From :</div><div class="ul" style="width:89px;height:28px;padding-left:7.5px;font-size:9.3px">21/05/2017${ico('cal',16,17)}</div><div style="width:47px;padding:11.5px 0 0 27.5px;white-space:nowrap">To :</div><div class="ul" style="width:88.5px;height:28px;padding-left:5.5px;font-size:9.3px">21/06/2017${ico('cal',16,17)}</div><div class="wbtn" style="width:44px;height:18.2px;margin:9.5px 0 0 34.5px">Submit</div></div>
  <div class="d-flex flex-grow-1"><div class="side"><div style="height:34px;padding-top:3px">Store Summary</div><div class="on" style="height:31px">Food items</div><div style="height:29px">Stationary</div><div style="height:30px">Sports equipments</div><div style="height:30px">Music instruments</div><div style="height:33px">Furniture</div><div style="height:32px">Toiletries</div></div>
  <div class="flex-grow-1 d-flex flex-column">
   <div class="d-flex align-items-center" style="height:41.8px;padding-left:43px;font-size:10.2px;white-space:nowrap"><div style="width:83px">Inventory value :</div><span class="green">190</span><div style="width:102px;margin-left:90.5px">Cost of goods sold :</div><span class="green">210</span>${ico('xls',20,19,'margin-left:132px')}</div>
   <table class="st"><colgroup>${[77.3,59.8,45.1,58.5,38.8,63.4,36.6,55,50,75.5].map(x=>`<col style="width:${x}px">`).join('')}</colgroup><thead><tr><th style="padding-left:13px">Item</th><th>Previous<br>Balance</th><th>Cost</th><th>Items<br>Purchase</th><th>Unit<br>Cost</th><th>Purchase<br>Cost total</th><th>Sold</th><th>System<br>Balance</th><th>Physical<br>Count</th><th style="padding-left:12px">Comment</th></tr></thead><tbody>${tr}</tbody></table>
   <div class="flex-grow-1 d-flex align-items-center justify-content-end" style="padding:4px 14px 0 0;font-size:8.8px">${ed?`Page No.<div class="mini" style="width:25.5px;height:16.5px;margin:0 28px 0 5px">1<i><span class="tri"></span></i></div>Next${ico('fwd',10,10,'color:#222;margin-left:3px')}`:''}</div>
   <div class="d-flex align-items-center justify-content-end" style="height:32.5px;background:#ddd;padding-right:${ed?31:28}px;gap:21px">${ed?'<div class="wbtn bg-white" style="width:44px;height:17.2px">Submit</div>':'<div class="wbtn bg-white" style="width:43.5px;height:16.5px">Cancel</div><div class="wbtn bg-white" style="width:47px;height:16.5px">Confirm</div>'}</div>
  </div></div>`;
});

document.querySelectorAll('.win').forEach(w=>w.insertAdjacentHTML('afterbegin',chrome(w.dataset.url)+(w.dataset.school?school(w.dataset.school):'')));
</script>
<script src="https://cdn.jsdelivr.net/npm/bootstrap@5.3.0/dist/js/bootstrap.bundle.min.js"></script>
</body>
</html>
